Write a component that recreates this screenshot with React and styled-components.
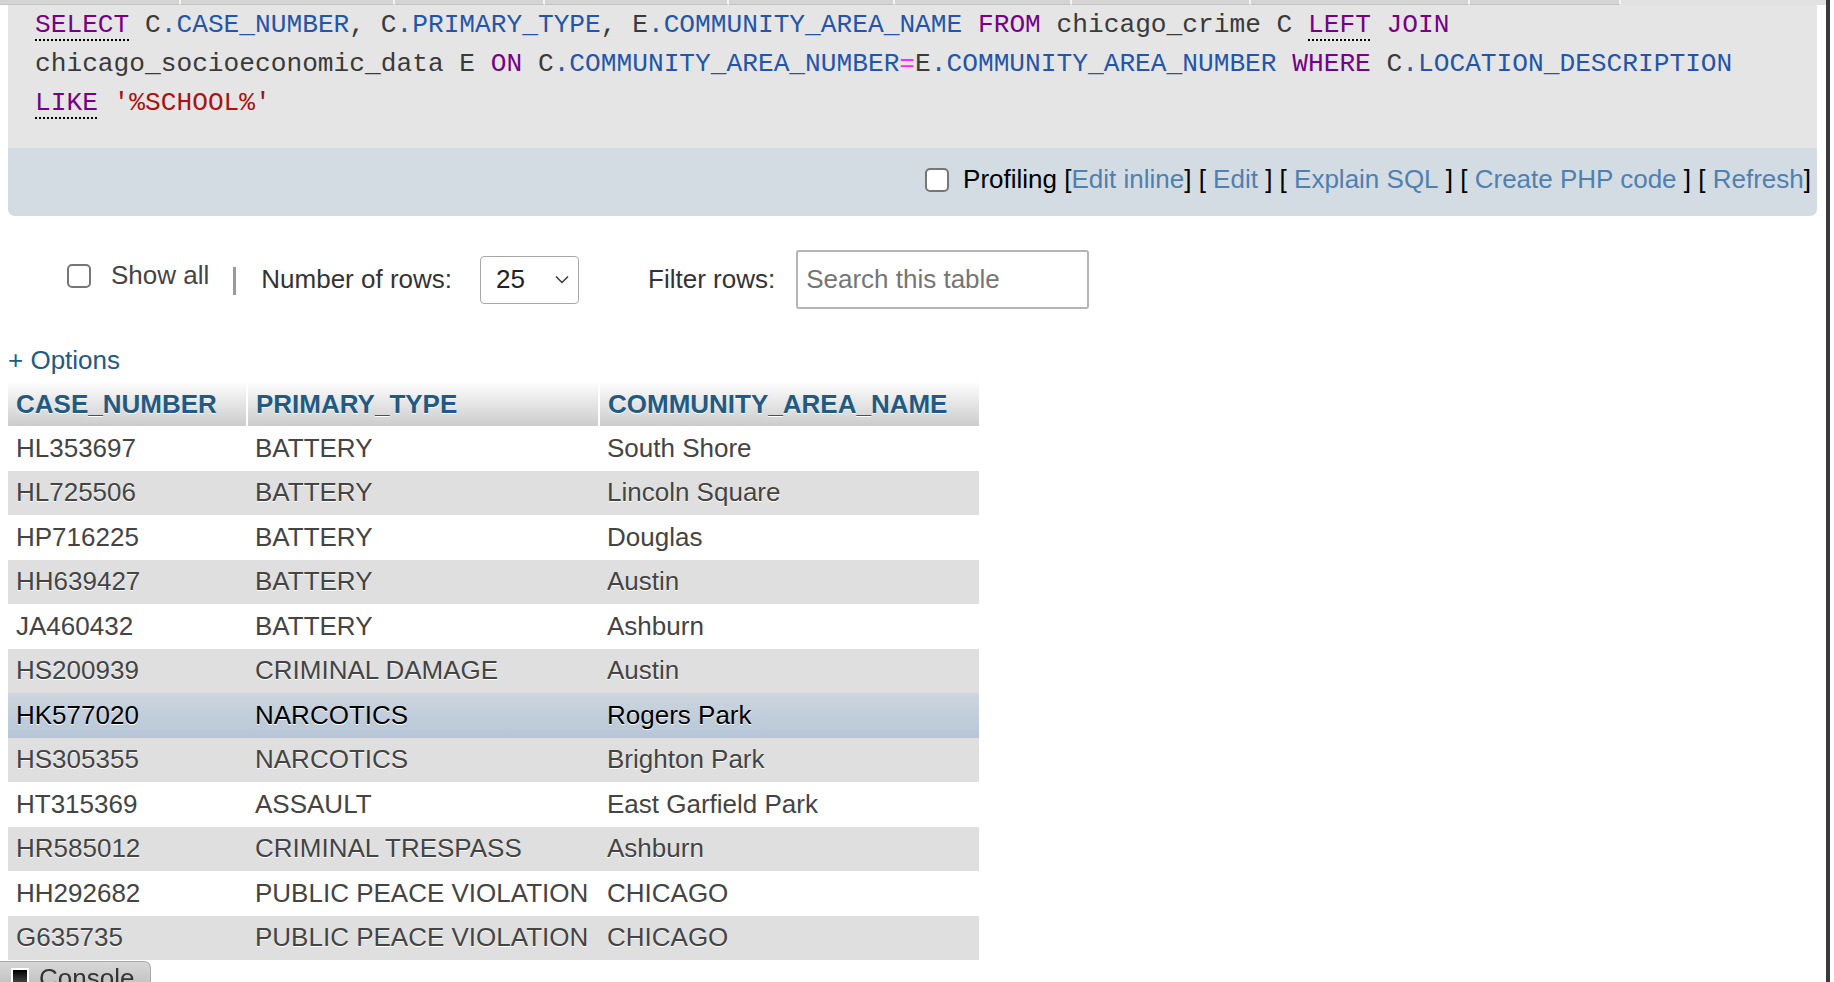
import styled, { createGlobalStyle } from "styled-components";

const GlobalStyle = createGlobalStyle`
  html, body {
    margin: 0;
    padding: 0;
    background: #fff;
  }
  body {
    font-family: "Liberation Sans", Arial, sans-serif;
    font-size: 26px;
    color: #444;
    overflow: hidden;
  }
`;

const Page = styled.div`
  width: 1830px;
  min-height: 982px;
  border-right: 4px solid #3a3a3a;
  box-sizing: border-box;
`;

const TabStrip = styled.div`
  display: flex;
  height: 5px;
  background: #e2e2e2;
`;

const TabStub = styled.div`
  width: ${(p) => p.$w}px;
  background: #d4d4d4;
  border-right: 2px solid #f4f4f4;
  border-bottom: 1px solid #c4c4c4;
  box-sizing: border-box;
`;

const QueryBox = styled.div`
  margin: 0 9px 0 8px;
  border-radius: 0 0 7px 7px;
  overflow: hidden;
`;

const Code = styled.div`
  background: #e5e5e5;
  padding: 1px 27px 25px;
  font-family: "Liberation Mono", "Courier New", monospace;
  font-size: 26.2px;
  line-height: 39px;
  color: #3a3a3a;
  white-space: pre;
`;

const CodeLine = styled.div``;

const Kw = styled.span`
  color: #770088;
  ${(p) =>
    p.$doc &&
    `
    text-decoration: underline dotted #000;
    text-underline-offset: 7px;
    text-decoration-thickness: 2px;
  `}
`;

const Col = styled.span`
  color: #2455a8;
`;

const Op = styled.span`
  color: #ee33ee;
`;

const Str = styled.span`
  color: #aa1111;
`;

const Tools = styled.div`
  background: #d3dce3;
  height: 68px;
  box-sizing: border-box;
  padding: 0 6px 5px 0;
  display: flex;
  align-items: center;
  justify-content: flex-end;
  color: #000;
  white-space: pre;
`;

const Check = styled.span`
  display: inline-block;
  width: 24px;
  height: 24px;
  box-sizing: border-box;
  border: 2px solid #767676;
  border-radius: 5px;
  background: #fff;
  margin-right: ${(p) => p.$gap}px;
`;

const ToolLink = styled.a`
  color: #4f80b0;
  text-decoration: none;
`;

const FilterBar = styled.div`
  display: flex;
  align-items: center;
  margin-top: 34px;
  height: 59px;
  padding-left: 67px;
  color: #333;
`;

const ShowAll = styled.label`
  display: flex;
  align-items: center;
  margin-top: -8px;
  color: #444;
`;

const Divider = styled.span`
  width: 3px;
  height: 28px;
  background: #9a9a9a;
  margin: 2px 25px 0 24px;
`;

const Select = styled.div`
  width: 99px;
  height: 48px;
  box-sizing: border-box;
  border: 1px solid #a8a8a8;
  border-radius: 4px;
  display: flex;
  align-items: center;
  justify-content: space-between;
  padding: 0 9px 0 15px;
  margin: 0 69px 0 28px;
  color: #222;
`;

const SearchInput = styled.div`
  width: 293px;
  height: 59px;
  box-sizing: border-box;
  border: 2px solid #b5b5b5;
  border-radius: 3px;
  display: flex;
  align-items: center;
  padding-left: 8px;
  margin-left: 21px;
  color: #757575;
`;

const Options = styled.a`
  display: block;
  margin: 36px 0 0 8px;
  line-height: 30px;
  color: #235a81;
  text-decoration: none;
`;

const Table = styled.table`
  margin: 6px 0 0 8px;
  border-collapse: collapse;
  table-layout: fixed;
  width: 971px;
`;

const Th = styled.th`
  width: ${(p) => p.$w}px;
  height: 45px;
  padding: 2px 8px 0;
  box-sizing: border-box;
  text-align: left;
  font-weight: bold;
  color: #235a81;
  text-shadow: 0 1px 0 #fff;
  background: linear-gradient(#ffffff, #cccccc);
  border-right: 2px solid #fff;
  white-space: nowrap;
  &:last-child {
    border-right: none;
  }
`;

const Tr = styled.tr`
  background: ${(p) =>
    p.$marked
      ? "linear-gradient(#ced6df, #b6c6d7)"
      : p.$even
      ? "#dfdfdf"
      : "#fff"};
  color: ${(p) => (p.$marked ? "#000" : "#444")};
`;

const Td = styled.td`
  height: 44.5px;
  padding: 0 8px;
  box-sizing: border-box;
  white-space: nowrap;
  text-shadow: 0 1px 0 #fff;
`;

const ConsoleTab = styled.div`
  position: fixed;
  left: 0;
  bottom: 0;
  width: 151px;
  height: 21px;
  box-sizing: border-box;
  background: linear-gradient(#d8d8d8, #c4c4c4);
  border: 1px solid #a8a8a8;
  border-left: none;
  border-bottom: none;
  border-radius: 0 7px 0 0;
  display: flex;
  align-items: flex-start;
  padding: 3px 0 0 11px;
  overflow: hidden;
  color: #333;
`;

const ConsoleIcon = styled.span`
  display: inline-block;
  width: 18px;
  height: 20px;
  margin: 3px 10px 0 0;
  background: linear-gradient(#000, #555);
  border: 2px solid #fff;
  box-sizing: border-box;
  flex-shrink: 0;
`;

const ConsoleText = styled.span`
  line-height: 26px;
`;

const tabs = [181, 214, 150, 184, 166, 177, 179, 219, 151];

const rows = [
  ["HL353697", "BATTERY", "South Shore"],
  ["HL725506", "BATTERY", "Lincoln Square"],
  ["HP716225", "BATTERY", "Douglas"],
  ["HH639427", "BATTERY", "Austin"],
  ["JA460432", "BATTERY", "Ashburn"],
  ["HS200939", "CRIMINAL DAMAGE", "Austin"],
  ["HK577020", "NARCOTICS", "Rogers Park"],
  ["HS305355", "NARCOTICS", "Brighton Park"],
  ["HT315369", "ASSAULT", "East Garfield Park"],
  ["HR585012", "CRIMINAL TRESPASS", "Ashburn"],
  ["HH292682", "PUBLIC PEACE VIOLATION", "CHICAGO"],
  ["G635735", "PUBLIC PEACE VIOLATION", "CHICAGO"],
];

const Chevron = () => (
  <svg width="14" height="9" viewBox="0 0 14 9" fill="none">
    <path d="M1 1.5 L7 7.5 L13 1.5" stroke="#333" strokeWidth="1.4" />
  </svg>
);

export default function App() {
  return (
    <Page>
      <GlobalStyle />
      <TabStrip>
        {tabs.map((w, i) => (
          <TabStub key={i} $w={w} />
        ))}
      </TabStrip>

      <QueryBox>
        <Code>
          <CodeLine>
            <Kw $doc>SELECT</Kw> C<Col>.CASE_NUMBER</Col>, C
            <Col>.PRIMARY_TYPE</Col>, E<Col>.COMMUNITY_AREA_NAME</Col>{" "}
            <Kw>FROM</Kw> chicago_crime C <Kw $doc>LEFT</Kw> <Kw>JOIN</Kw>
          </CodeLine>
          <CodeLine>
            chicago_socioeconomic_data E <Kw>ON</Kw> C
            <Col>.COMMUNITY_AREA_NUMBER</Col>
            <Op>=</Op>E<Col>.COMMUNITY_AREA_NUMBER</Col> <Kw>WHERE</Kw> C
            <Col>.LOCATION_DESCRIPTION</Col>
          </CodeLine>
          <CodeLine>
            <Kw $doc>LIKE</Kw> <Str>'%SCHOOL%'</Str>
          </CodeLine>
        </Code>
        <Tools>
          <Check $gap={14} />
          Profiling [<ToolLink href="#">Edit inline</ToolLink>] [{" "}
          <ToolLink href="#">Edit</ToolLink> ] [{" "}
          <ToolLink href="#">Explain SQL</ToolLink> ] [{" "}
          <ToolLink href="#">Create PHP code</ToolLink> ] [{" "}
          <ToolLink href="#">Refresh</ToolLink>]
        </Tools>
      </QueryBox>

      <FilterBar>
        <ShowAll>
          <Check $gap={20} />
          Show all
        </ShowAll>
        <Divider />
        <span>Number of rows:</span>
        <Select>
          <span>25</span>
          <Chevron />
        </Select>
        <span>Filter rows:</span>
        <SearchInput>Search this table</SearchInput>
      </FilterBar>

      <Options href="#">+ Options</Options>

      <Table>
        <thead>
          <tr>
            <Th $w={239}>CASE_NUMBER</Th>
            <Th $w={352}>PRIMARY_TYPE</Th>
            <Th $w={380}>COMMUNITY_AREA_NAME</Th>
          </tr>
        </thead>
        <tbody>
          {rows.map((r, i) => (
            <Tr key={r[0]} $even={i % 2 === 1} $marked={i === 6}>
              <Td>{r[0]}</Td>
              <Td>{r[1]}</Td>
              <Td>{r[2]}</Td>
            </Tr>
          ))}
        </tbody>
      </Table>

      <ConsoleTab>
        <ConsoleIcon />
        <ConsoleText>Console</ConsoleText>
      </ConsoleTab>
    </Page>
  );
}
